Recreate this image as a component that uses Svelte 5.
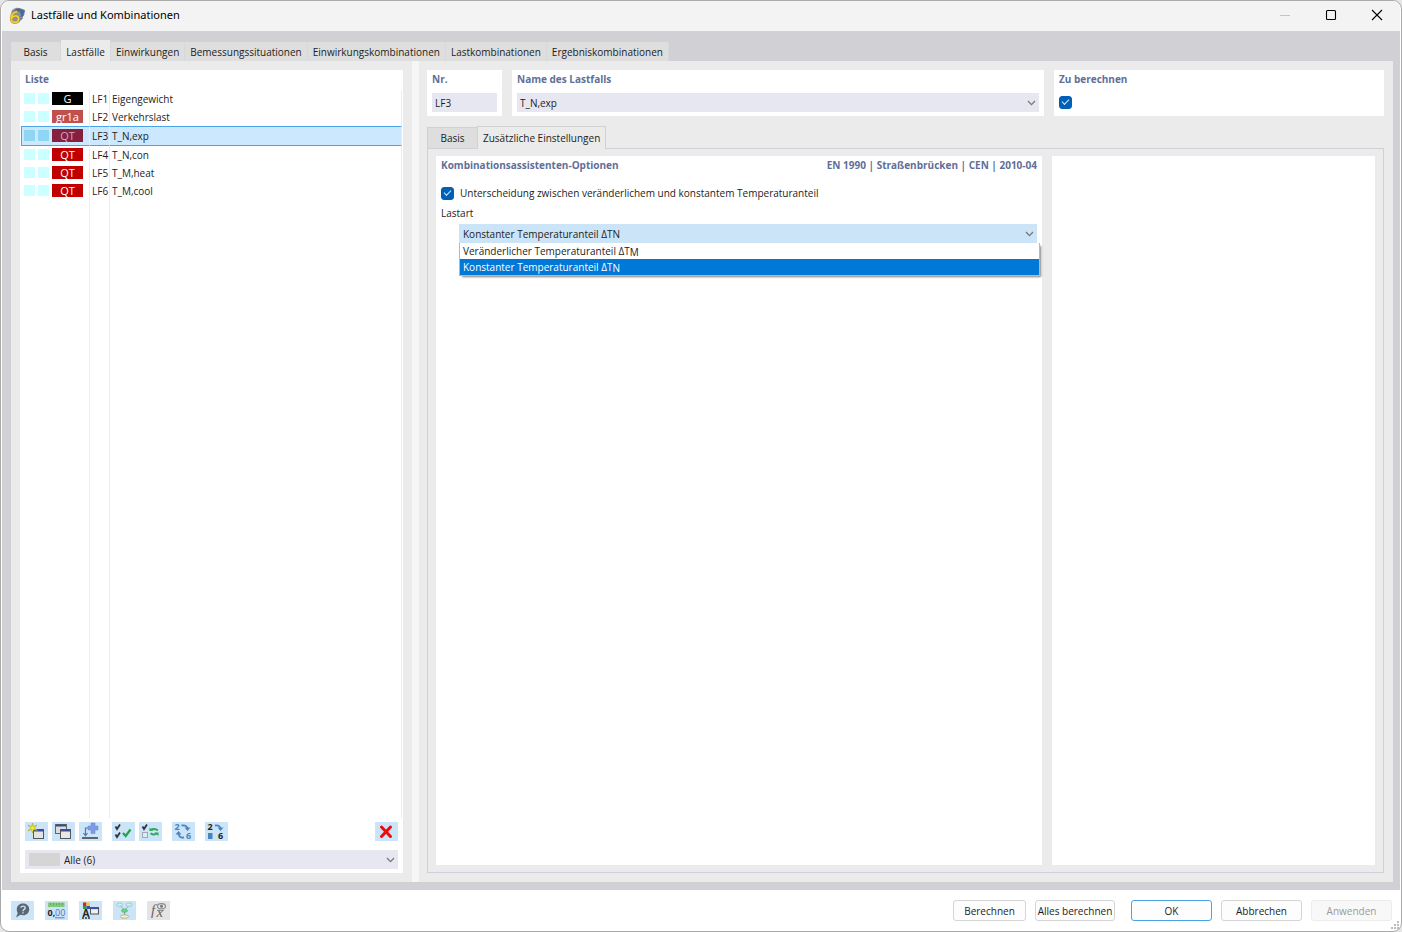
<script lang="ts">
  const tabs = [
    'Basis',
    'Lastfälle',
    'Einwirkungen',
    'Bemessungssituationen',
    'Einwirkungskombinationen',
    'Lastkombinationen',
    'Ergebniskombinationen',
  ];
  const subTabs = ['Basis', 'Zusätzliche Einstellungen'];

  const cases = [
    { id: 'LF1', tag: 'G', kind: 'g', name: 'Eigengewicht' },
    { id: 'LF2', tag: 'gr1a', kind: 'gr', name: 'Verkehrslast' },
    { id: 'LF3', tag: 'QT', kind: 'qt', name: 'T_N,exp' },
    { id: 'LF4', tag: 'QT', kind: 'qt', name: 'T_N,con' },
    { id: 'LF5', tag: 'QT', kind: 'qt', name: 'T_M,heat' },
    { id: 'LF6', tag: 'QT', kind: 'qt', name: 'T_M,cool' },
  ];

  const loadTypes = [
    { value: 'M', label: 'Veränderlicher Temperaturanteil ΔT' },
    { value: 'N', label: 'Konstanter Temperaturanteil ΔT' },
  ];

  let activeTab = $state(1);
  let activeSubTab = $state(1);
  let selected = $state('LF3');
  let toCalculate = $state(true);
  let distinguish = $state(true);
  let loadType = $state('N');
  let menuOpen = $state(true);

  const current = $derived(cases.find((c) => c.id === selected) ?? cases[0]);

  function pick(value: string) {
    loadType = value;
    menuOpen = false;
  }
</script>

{#snippet chevron()}
  <svg class="chevron" viewBox="0 0 9 6" aria-hidden="true">
    <path d="M1 1 L4.5 4.6 L8 1" fill="none" stroke="#777" stroke-width="1.3" />
  </svg>
{/snippet}

<div class="window">
  <header class="titlebar">
    <svg class="app-icon" viewBox="0 0 17 17" aria-hidden="true">
      <path d="M2 7 L3 3 L7 0.8 L11 1 L16 3 L15.5 7 L13 12 L10 15.5 L4 14 Z" fill="#8494ab" />
      <path d="M4.5 3.2 L9 1.2 L13 2.4 L15.8 3.6 L14.5 7.5 L12 9 L11 5 L8 4 Z" fill="#4f6892" />
      <path d="M11.5 9.5 L14.5 8.5 M11.5 12 L13.5 11.5" stroke="#4a5c7a" stroke-width="1" />
      <path d="M8.2 4.6 C4.6 5.2 2.3 8 2.3 11.4 C2.3 13.9 3.8 15.3 5.9 15.3 C8.1 15.3 9.6 13.9 9.6 11.9 C9.6 10.1 8.4 8.9 6.6 8.9 C5.1 8.9 3.6 9.8 2.8 11.2" fill="none" stroke="#a1841c" stroke-width="2.7" />
      <path d="M8.2 4.6 C4.6 5.2 2.3 8 2.3 11.4 C2.3 13.9 3.8 15.3 5.9 15.3 C8.1 15.3 9.6 13.9 9.6 11.9 C9.6 10.1 8.4 8.9 6.6 8.9 C5.1 8.9 3.6 9.8 2.8 11.2" fill="none" stroke="#f3cb3a" stroke-width="1.9" />
    </svg>
    <h1>Lastfälle und Kombinationen</h1>
    <div class="win-controls">
      <button aria-label="Minimieren" disabled>
        <svg viewBox="0 0 12 12"><path d="M1 6.5 H11" stroke="#c3c3c3" /></svg>
      </button>
      <button aria-label="Maximieren">
        <svg viewBox="0 0 12 12"><rect x="1.5" y="1.5" width="9" height="9" rx="1" fill="none" stroke="#000" stroke-width="1.1" /></svg>
      </button>
      <button aria-label="Schließen">
        <svg viewBox="0 0 12 12"><path d="M1 1 L11 11 M11 1 L1 11" stroke="#000" stroke-width="1.1" /></svg>
      </button>
    </div>
  </header>

  <main class="frame">
    <div class="tabs" role="tablist">
      {#each tabs as tab, i}
        <button role="tab" class="tab" class:active={activeTab === i} aria-selected={activeTab === i} onclick={() => (activeTab = i)}>{tab}</button>
      {/each}
    </div>

    <div class="page">
      <section class="side">
        <div class="list-box">
          <h2>Liste</h2>
          <div class="list">
            <table>
              <tbody>
                {#each cases as c}
                  <tr class:selected={c.id === selected} onclick={() => (selected = c.id)}>
                    <td class="marks">
                      <div class="mark-row">
                        <span class="mark"></span>
                        <span class="mark"></span>
                        <span class="tag {c.kind}">{c.tag}</span>
                      </div>
                    </td>
                    <td class="num">{c.id}</td>
                    <td class="name">{c.name}</td>
                  </tr>
                {/each}
                <tr class="rest"><td></td><td></td><td></td></tr>
              </tbody>
            </table>
          </div>

          <div class="list-tools">
            <button class="tool" aria-label="Neu">
              <svg viewBox="0 0 23 19">
                <rect x="8.5" y="7.5" width="10" height="9" fill="#e4e4e4" stroke="#555" />
                <path d="M9 8.5 H18" stroke="#3a4f9c" stroke-width="2" />
                <path d="M7.5 1 L8.3 4.6 L12 3 L9.4 6 L12.3 8.5 L8.6 7.4 L7.5 11 L6.5 7.4 L3 9 L5.6 6 L3 3 L6.7 4.6 Z" fill="#f3ea3c" stroke="#a8a21c" stroke-width="0.6" />
              </svg>
            </button>
            <button class="tool" aria-label="Kopieren">
              <svg viewBox="0 0 23 19">
                <rect x="3.5" y="2.5" width="11" height="9" fill="#dcdcdc" stroke="#666" />
                <path d="M4 3.5 H14" stroke="#3a4a8c" stroke-width="2" />
                <rect x="8.5" y="7.5" width="10" height="9" fill="#e8e8e8" stroke="#555" />
                <path d="M9 8.5 H18" stroke="#3a4f9c" stroke-width="2" />
              </svg>
            </button>
            <button class="tool wide-gap" aria-label="Hinzufügen">
              <svg viewBox="0 0 23 19">
                <path d="M12 1 H16 V4 H19 V8 H16 V11.5 H12 V8 H9 V4 H12 Z" fill="#7f9be6" stroke="#6784d4" stroke-width="0.5" />
                <path d="M9 6 H6.5 V13 M4.5 11 L6.5 13.8 L8.5 11" fill="none" stroke="#4a78c0" stroke-width="1.2" />
                <path d="M3 16 H19" stroke="#555" stroke-width="1.8" />
              </svg>
            </button>
            <button class="tool" aria-label="Alle auswählen">
              <svg viewBox="0 0 23 19">
                <path d="M3.5 4.5 L5 7 L8 2.5 M3.5 12.5 L5 15 L8 10.5" fill="none" stroke="#333" stroke-width="1.8" />
                <path d="M11 11 L13.7 14 L18.5 7.5" fill="none" stroke="#1fa34a" stroke-width="2.2" />
              </svg>
            </button>
            <button class="tool wide-gap" aria-label="Auswahl umkehren">
              <svg viewBox="0 0 23 19">
                <path d="M3.5 4.5 L5 7 L8 2.5" fill="none" stroke="#333" stroke-width="1.8" />
                <rect x="3.5" y="10.5" width="5" height="5" fill="#d8ecfa" stroke="#a0a8b0" />
                <path d="M12 8 C14 6.3 16.5 7 18.8 8.3 M18 11.3 C16 13 13.5 12.7 11.5 11.2" fill="none" stroke="#35a75a" stroke-width="1.9" />
                <path d="M10.5 5.5 V9 H14.5 Z M19.5 14 V10.4 H15.5 Z" fill="#35a75a" />
              </svg>
            </button>
            <button class="tool wide-gap" aria-label="Neu nummerieren">
              <svg viewBox="0 0 23 19">
                <text x="2.5" y="8" class="digit blue">2</text>
                <text x="14" y="17" class="digit blue">6</text>
                <path d="M9.5 3.5 C14 3 15.5 4.5 15.5 7 M12 15.5 C8 16 6.5 14 6.5 11" fill="none" stroke="#4b83be" stroke-width="1.8" />
                <path d="M12.5 5.5 H18.5 L15.5 9 Z M3.5 12.5 H9.5 L6.5 9 Z" fill="#4b83be" />
              </svg>
            </button>
            <button class="tool" aria-label="Nummer zuweisen">
              <svg viewBox="0 0 23 19">
                <text x="2.5" y="8" class="digit">2</text>
                <text x="13" y="17" class="digit">6</text>
                <rect x="3" y="11" width="4.5" height="6" fill="#4b83be" />
                <path d="M10 3.5 C14 3 15.5 4.5 15.5 7" fill="none" stroke="#4b83be" stroke-width="1.8" />
                <path d="M12.5 5.5 H18.5 L15.5 9 Z" fill="#4b83be" />
              </svg>
            </button>
            <button class="tool delete" aria-label="Löschen">
              <svg viewBox="0 0 23 19">
                <path d="M6.5 5 L15.5 14.5 M15.5 5 L6.5 14.5" stroke="#f00a0a" stroke-width="3" stroke-linecap="round" />
              </svg>
            </button>
          </div>

          <div class="select filter">
            <span class="swatch"></span>
            <select aria-label="Filter">
              <option>Alle (6)</option>
            </select>
            {@render chevron()}
          </div>
        </div>
      </section>

      <div class="splitter"></div>

      <section class="detail">
        <div class="head">
          <div class="box">
            <h2><label for="case-no">Nr.</label></h2>
            <input id="case-no" class="field" type="text" value={current.id} readonly />
          </div>
          <div class="box">
            <h2><label for="case-name">Name des Lastfalls</label></h2>
            <div class="select">
              <select id="case-name">
                <option>{current.name}</option>
              </select>
              {@render chevron()}
            </div>
          </div>
          <div class="box">
            <h2><label for="calc">Zu berechnen</label></h2>
            <input id="calc" type="checkbox" bind:checked={toCalculate} />
          </div>
        </div>

        <div class="sub-tabs" role="tablist">
          {#each subTabs as tab, i}
            <button role="tab" class="sub-tab" class:active={activeSubTab === i} aria-selected={activeSubTab === i} onclick={() => (activeSubTab = i)}>{tab}</button>
          {/each}
        </div>

        <div class="sub-page">
          <div class="options">
            <div class="options-head">
              <h2>Kombinationsassistenten-Optionen</h2>
              <h2>EN 1990 | Straßenbrücken | CEN | 2010-04</h2>
            </div>
            <label class="check">
              <input type="checkbox" bind:checked={distinguish} />
              Unterscheidung zwischen veränderlichem und konstantem Temperaturanteil
            </label>
            <label class="caption" for="load-type">Lastart</label>
            <div class="select load-type">
              <select id="load-type" bind:value={loadType}>
                {#each loadTypes as t}
                  <option value={t.value}>{t.label}{t.value}</option>
                {/each}
              </select>
              {@render chevron()}
              {#if menuOpen}
                <div class="menu" role="listbox" aria-label="Lastart">
                  {#each loadTypes as t}
                    <button role="option" class:on={loadType === t.value} aria-selected={loadType === t.value} onclick={() => pick(t.value)}>{t.label}<sub>{t.value}</sub></button>
                  {/each}
                </div>
              {/if}
            </div>
          </div>
          <div class="preview"></div>
        </div>
      </section>
    </div>
  </main>

  <footer>
    <div class="foot-tools">
      <button class="tool" aria-label="Hilfe">
        <svg viewBox="0 0 23 19">
          <path d="M12 2.5 C15.8 2.5 18.2 5 18.2 8.3 C18.2 11.7 15.8 14.3 12 14.3 L9.5 13.8 L5 16.5 L6.8 12 C6 11 5.8 9.7 5.8 8.3 C5.8 5 8.2 2.5 12 2.5 Z" fill="#5c6670" />
          <path d="M10 6.8 C10 4.5 14.2 4.5 14.2 6.9 C14.2 8.6 12 8.3 12 10.2 M12 11.3 V12.6" fill="none" stroke="#cce4f7" stroke-width="1.4" />
        </svg>
      </button>
      <button class="tool" aria-label="Einheiten">
        <svg viewBox="0 0 23 19">
          <rect x="3" y="1.5" width="16.5" height="4.5" fill="#83c77a" />
          <path d="M5.5 2 V4 M8.5 2 V4 M11.5 2 V4 M14.5 2 V4 M17.5 2 V4" stroke="#5ba552" stroke-width="0.8" />
          <text x="2.5" y="15" class="units">0,</text>
          <text x="10" y="15" class="units blue">00</text>
          <path d="M10 16.8 H19.5" stroke="#4b7fd0" />
        </svg>
      </button>
      <button class="tool" aria-label="Darstellung">
        <svg viewBox="0 0 23 19">
          <rect x="4" y="1.5" width="3.5" height="3.5" fill="#e02020" />
          <rect x="7.5" y="1.5" width="3.5" height="3.5" fill="#f0d020" />
          <rect x="4" y="5" width="3.5" height="3" fill="#30a030" />
          <rect x="7.5" y="5" width="3.5" height="3" fill="#3050d0" />
          <text x="3.5" y="15.5" class="letter">A</text>
          <path d="M3 17 H11.5" stroke="#333" stroke-width="1.4" stroke-dasharray="2 1" />
          <rect x="11.5" y="6.5" width="8" height="6.5" fill="#eee" stroke="#555" />
          <path d="M12 7.3 H19" stroke="#3a4fb0" stroke-width="1.6" />
        </svg>
      </button>
      <button class="tool" aria-label="Struktur">
        <svg viewBox="0 0 23 19">
          <path d="M7 4.5 L11.5 9 L16 4.5 M11.5 9 V15" fill="none" stroke="#8aa898" stroke-width="1" />
          <ellipse cx="6.7" cy="3.7" rx="2.9" ry="1.7" fill="#cdf0ec" stroke="#8cc8be" stroke-width="0.8" />
          <ellipse cx="16" cy="3.7" rx="2.9" ry="1.7" fill="#cdf0ec" stroke="#8cc8be" stroke-width="0.8" />
          <ellipse cx="11.5" cy="9.7" rx="3" ry="1.6" fill="#62dc88" stroke="#46a56c" stroke-width="0.6" />
          <ellipse cx="11.5" cy="15.5" rx="4.2" ry="1.7" fill="#f4efc6" stroke="#a9a578" stroke-width="0.8" />
        </svg>
      </button>
      <button class="tool off" aria-label="Formel" disabled>
        <svg viewBox="0 0 23 19">
          <text x="4" y="14" class="formula">f</text>
          <text x="9.5" y="16" class="formula">x</text>
          <path d="M10 9.3 H17" stroke="#808080" stroke-width="0.9" />
          <ellipse cx="14.5" cy="5.2" rx="4" ry="2.6" fill="none" stroke="#8a8a8a" stroke-width="1.1" />
          <circle cx="14.5" cy="5.2" r="1.5" fill="#777" />
        </svg>
      </button>
    </div>
    <div class="actions">
      <button class="action small">Berechnen</button>
      <button class="action medium">Alles berechnen</button>
      <button class="action primary">OK</button>
      <button class="action">Abbrechen</button>
      <button class="action" disabled>Anwenden</button>
    </div>
    <svg class="grip" viewBox="0 0 9 9" aria-hidden="true">
      <path d="M6 0 H8 V2 H6 Z M3 3 H5 V5 H3 Z M6 3 H8 V5 H6 Z M0 6 H2 V8 H0 Z M3 6 H5 V8 H3 Z M6 6 H8 V8 H6 Z" fill="#bcbcbc" />
    </svg>
  </footer>
</div>

<style>
  :global(body) {
    background: #e6e6e6;
  }
  .window {
    --text: #1c1c1c;
    --head: #5f6f98;
    --field: #e7e7f1;
    --blue: #cce4f7;
    box-sizing: border-box;
    height: 100vh;
    padding: 0 1px 1px;
    display: flex;
    flex-direction: column;
    font-family: 'Open Sans', 'Noto Sans', sans-serif;
    font-size: 10px;
    line-height: 14px;
    color: var(--text);
    border: 1px solid #aaa;
    border-radius: 9px;
    background: #fff;
  }
  .window *, .window *::before, .window *::after { box-sizing: border-box; }
  button, select, input {
    font: inherit;
    color: inherit;
    margin: 0;
    border: 0;
    border-radius: 0;
    padding: 0;
  }
  svg { display: block; overflow: visible; }
  h1, h2 { margin: 0; }
  h2 {
    font-size: 10px;
    font-weight: 700;
    line-height: 14px;
    color: var(--head);
  }

  .titlebar {
    display: flex;
    align-items: center;
    height: 30px;
    padding: 0 0 2px 7px;
    background: #f3f3f3;
    border-radius: 8px 8px 0 0;
  }
  .app-icon { width: 17px; height: 17px; }
  h1 {
    margin-left: 5px;
    font-family: 'Noto Sans', sans-serif;
    font-size: 11px;
    font-weight: 400;
    color: #000;
  }
  .win-controls { display: flex; margin-left: auto; }
  .win-controls button {
    width: 46px;
    height: 28px;
    display: grid;
    place-items: center;
    background: none;
  }
  .win-controls svg { width: 12px; height: 12px; }

  .frame {
    flex: 1;
    min-height: 0;
    display: flex;
    flex-direction: column;
    padding: 9px 7px 8px 9px;
    background: #d0d0d5;
  }
  .tabs { display: flex; align-items: flex-end; }
  .tab {
    min-width: 50px;
    height: 19px;
    padding: 0 5px;
    background: #dedede;
    border-right: 1px solid #d8d8da;
  }
  .tab.active { height: 21px; padding-top: 2px; background: #ebebeb; }

  .page {
    flex: 1;
    min-height: 0;
    display: grid;
    grid-template-columns: 401px 7px 1fr;
    background: #ebebeb;
  }
  .splitter { background: #f6f6f6; cursor: col-resize; }
  .side { padding: 9px; display: flex; min-height: 0; }
  .list-box {
    flex: 1;
    display: flex;
    flex-direction: column;
    padding: 2px 5px 4px;
    background: #fff;
  }
  .list { flex: 1; min-height: 0; margin: 4px -4px 4px; }
  table {
    width: 100%;
    height: 100%;
    border-collapse: separate;
    border-spacing: 0;
  }
  td {
    height: 18px;
    padding: 0;
    border-right: 1px solid #ededed;
  }
  .marks { width: 69px; padding-top: 2px; vertical-align: top; }
  .num { width: 20px; padding-left: 2px; }
  .name { padding-left: 2px; }
  .mark-row { display: flex; align-items: center; padding-left: 3px; }
  .mark { width: 11px; height: 11px; margin-right: 3px; background: #ccffff; }
  .tag {
    width: 31px;
    height: 13px;
    line-height: 14px;
    font-size: 11px;
    text-align: center;
    color: #fff;
  }
  .tag.g { background: #000; }
  .tag.gr { background: #c0504d; }
  .tag.qt { background: #c00000; }
  .selected td {
    height: 20px;
    background: #cce8ff;
    border-top: 1px solid #4ba3e8;
    border-bottom: 1px solid #4ba3e8;
  }
  .selected td:first-child { border-left: 1px solid #4ba3e8; }
  .selected .mark-row { padding-left: 2px; }
  .selected .mark { background: #8fd6f5; }
  .selected .tag { background: #862040; color: #c9a9c0; }
  .rest td { height: auto; }

  .list-tools { display: flex; gap: 4px; margin-bottom: 9px; }
  .tool { width: 23px; height: 19px; background: var(--blue); }
  .tool svg { width: 23px; height: 19px; }
  .tool.off { background: #e4e4e4; }
  .tool.wide-gap { margin-right: 6px; }
  .tool.delete { margin-left: auto; }
  .digit {
    font-size: 9px;
    font-weight: 700;
    fill: #222;
  }
  .digit.blue { fill: #4b83be; }
  .units {
    font-size: 9px;
    font-weight: 700;
    fill: #222;
  }
  .units.blue { font-weight: 400; fill: #3f78d0; }
  .letter { font-size: 10px; font-weight: 700; fill: #222; }
  .formula {
    font-family: 'Liberation Serif', serif;
    font-size: 15px;
    font-style: italic;
    fill: #666;
  }

  .select { position: relative; display: flex; }
  .select select {
    flex: 1;
    min-width: 0;
    height: 19px;
    padding: 0 20px 0 3px;
    appearance: none;
    background: var(--field);
  }
  .chevron {
    position: absolute;
    right: 3px;
    top: 7px;
    width: 9px;
    height: 6px;
    pointer-events: none;
  }
  .filter { align-items: center; background: var(--field); }
  .filter select { padding-left: 4px; }
  .swatch { width: 31px; height: 13px; margin-left: 4px; background: #d5d5d5; }

  .detail {
    display: flex;
    flex-direction: column;
    min-width: 0;
    padding: 9px 9px 9px 8px;
  }
  .head {
    display: grid;
    grid-template-columns: 75px 532fr 330fr;
    gap: 10px;
  }
  .box { height: 46px; padding: 2px 5px; background: #fff; }
  .box h2 { margin-bottom: 7px; }
  .field {
    display: block;
    width: 100%;
    height: 19px;
    padding: 0 3px;
    background: var(--field);
  }
  input[type='checkbox'] {
    display: block;
    position: relative;
    flex: none;
    width: 13px;
    height: 13px;
    appearance: none;
    background: #fff;
    border: 1px solid #8a8a8a;
    border-radius: 3px;
  }
  input[type='checkbox']:checked { background: #0060b8; border-color: #0060b8; }
  input[type='checkbox']:checked::after {
    content: '';
    position: absolute;
    left: 2px;
    top: 2px;
    width: 7px;
    height: 4px;
    border: solid #d6e8f8;
    border-width: 0 0 1px 1px;
    transform: rotate(-45deg);
  }
  .box input[type='checkbox'] { margin-top: 10px; }

  .sub-tabs { display: flex; align-items: flex-end; margin-top: 10px; }
  .sub-tab {
    min-width: 50px;
    height: 21px;
    padding: 0 5px;
    background: #dedede;
    border: 1px solid #d0d0d5;
    border-right: 0;
    border-bottom: 0;
  }
  .sub-tab.active {
    position: relative;
    height: 23px;
    margin-bottom: -1px;
    background: #ebebeb;
    border-right: 1px solid #d0d0d5;
  }
  .sub-page {
    flex: 1;
    display: grid;
    grid-template-columns: 606fr 323fr;
    gap: 10px;
    padding: 7px 8px;
    border: 1px solid #d0d0d8;
  }
  .options { padding: 2px 5px; background: #fff; }
  .preview { background: #fff; }
  .options-head { display: flex; justify-content: space-between; }
  .check {
    display: flex;
    align-items: center;
    gap: 6px;
    margin-top: 14px;
  }
  .caption { display: block; margin: 6px 0 4px; }
  .load-type { margin-left: 18px; }
  .load-type select { padding-left: 4px; background: var(--blue); }
  .menu {
    position: absolute;
    z-index: 1;
    left: 0;
    right: -3px;
    top: 19px;
    background: #fff;
    border: 1px solid #b8b8b8;
    border-top: 0;
    box-shadow: 2px 2px 2px -1px rgba(0, 0, 0, 0.5);
  }
  .menu button {
    display: block;
    width: 100%;
    height: 16px;
    padding: 0 3px;
    line-height: 16px;
    text-align: left;
    background: #fff;
  }
  .menu button.on { background: #0078d7; color: #fff; }
  sub { font-size: 10px; line-height: 0; vertical-align: -1px; }

  footer {
    position: relative;
    display: flex;
    align-items: center;
    justify-content: space-between;
    height: 40px;
    padding: 0 8px 0 9px;
  }
  .foot-tools { display: flex; gap: 11px; }
  .actions { display: flex; gap: 9px; }
  .action {
    width: 81px;
    height: 21px;
    padding-top: 2px;
    background: #fdfdfd;
    border: 1px solid #d5d5d5;
    border-radius: 3px;
    white-space: nowrap;
  }
  .action.small { width: 73px; }
  .action.medium { width: 80px; margin-right: 7px; }
  .action.primary { border-color: #4ba3e8; }
  .action:disabled { color: #9a9a9a; background: #f8f8f8; border-color: #ececec; }
  .grip {
    position: absolute;
    right: 0;
    bottom: 0;
    width: 9px;
    height: 9px;
  }
</style>
